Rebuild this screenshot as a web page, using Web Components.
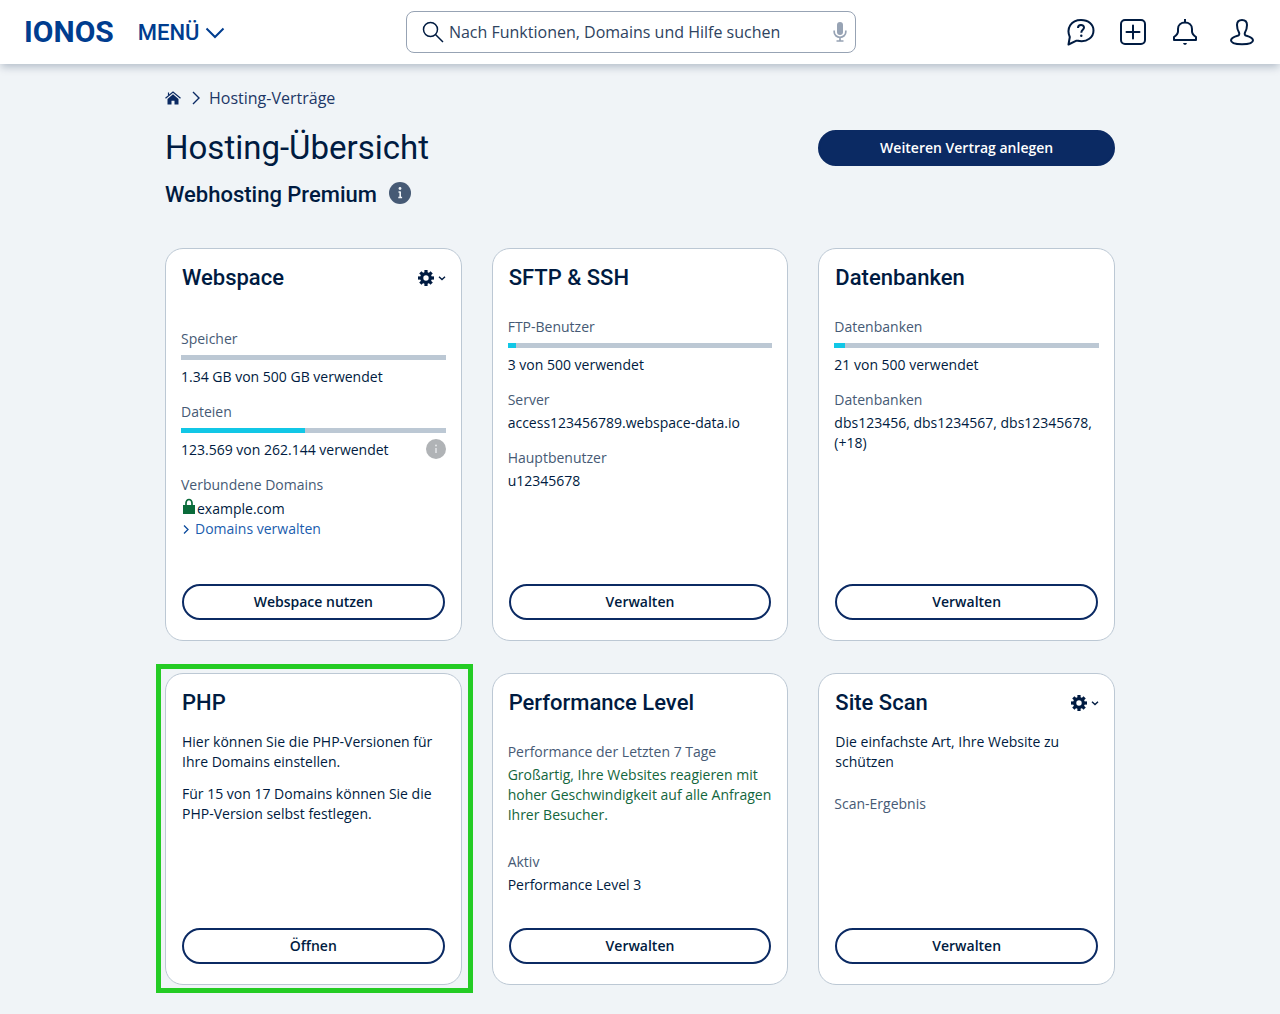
<!DOCTYPE html>
<html lang="de">
<head>
<meta charset="utf-8">
<meta name="viewport" content="width=device-width, initial-scale=1">
<title>Hosting-Übersicht</title>
<style>
  :root {
    --navy: #0b2a63;
    --ink: #001b41;
    --muted: #465a75;
    --line: #bcc8d4;
    --brand: #003d8f;
    --heading: Roboto, "Noto Sans", sans-serif;
  }
  body {
    margin: 0;
    min-height: 100vh;
    background: #f0f4f7;
    color: var(--ink);
    font: 14px/20px "Open Sans", "Noto Sans", sans-serif;
  }
</style>
</head>
<body>
<hosting-page></hosting-page>

<script>
const define = (name, html, setup) => {
  const template = document.createElement('template');
  template.innerHTML = html;
  customElements.define(name, class extends HTMLElement {
    constructor() {
      super();
      this.attachShadow({ mode: 'open' }).append(template.content.cloneNode(true));
    }
    connectedCallback() {
      if (setup) setup(this, this.shadowRoot);
    }
  });
};

const gearTeeth = [0, 45, 90, 135, 180, 225, 270, 315]
  .map(a => `<rect x="6.4" y="0" width="3.2" height="4" transform="rotate(${a} 8 8)"/>`).join('');

const icons = {
  down: [20, 12, '<path d="M1.5 1.5 10 10l8.500-8.500" fill="none" stroke="currentColor" stroke-width="2"/>'],
  search: [22, 22, '<g fill="none" stroke="currentColor" stroke-width="1.500"><circle cx="8.500" cy="8.500" r="7"/><path d="M13.500 13.500 21 21"/></g>'],
  mic: [14, 22, '<rect x="4" y="1" width="6" height="13" rx="3" fill="currentColor"/><path d="M1.200 9.500v1.500a5.800 5.300 0 0 0 11.600 0V9.500M7 16v4M3.500 20h7" fill="none" stroke="currentColor" stroke-width="1.700"/>'],
  help: [28, 28, '<path d="M1.500 26.500 2.800 19C-1 10.500 4 2 14 2c7.500 0 12.500 4.500 12.500 10.500 0 7-6.500 11.500-14 10.500-1.500-.2-2-.5-3-.3z" fill="none" stroke="currentColor" stroke-width="2" stroke-linejoin="round"/><path d="M11 10c0-3.800 6-3.800 6-.5 0 2.300-2.700 2.300-2.700 5.200" fill="none" stroke="currentColor" stroke-width="2"/><circle cx="14.300" cy="17.800" r="1.200" fill="currentColor"/>'],
  plus: [28, 28, '<g fill="none" stroke="currentColor" stroke-width="2"><rect x="2" y="2" width="24" height="24" rx="4"/><path d="M14 7.500v13M7.500 14h13" stroke-linecap="round"/></g>'],
  bell: [28, 28, '<g fill="none" stroke="currentColor" stroke-width="2" stroke-linejoin="round"><path d="M14 1v3M3 22h22v-3c-2.800-2-4-3.200-4-5.500V11c0-4-3-6.500-7-6.500S7 7 7 11v2.500C7 15.800 5.800 17 3 19z"/></g><path d="M12 25h4l-1 1.800h-2z" fill="currentColor"/>'],
  user: [28, 28, '<path d="M14 2c-3 0-5 2-5 5 0 3.500.8 5.500 2 7.500.7 1.500.2 2.800-1.500 3.300C5.500 19 3 20.200 3 22.300 3 25 8 26.300 14 26.300s11-1.300 11-4c0-2.100-2.500-3.300-6.500-4.500-1.700-.5-2.200-1.800-1.500-3.300 1.200-2 2-4 2-7.500 0-3-2-5-5-5z" fill="none" stroke="currentColor" stroke-width="2" stroke-linejoin="round"/>'],
  home: [16, 14, '<path d="M8 3.200 2.500 8v5.500h4V9.800h3v3.700h4V8z" fill="currentColor"/><path d="M.5 7.300 8 1l7.500 6.300M3.500 4V1.500" fill="none" stroke="currentColor" stroke-width="1.200"/>'],
  next: [10, 14, '<path d="m2 1 6 6-6 6" fill="none" stroke="currentColor" stroke-width="1.400"/>'],
  more: [8, 10, '<path d="m2 1.500 4 4-4 4" fill="none" stroke="currentColor" stroke-width="1.300"/>'],
  gear: [16, 16, `<g fill="currentColor">${gearTeeth}</g><circle cx="8" cy="8" r="4.300" fill="none" stroke="currentColor" stroke-width="3.200"/>`],
  caret: [8, 6, '<path d="m1 1.800 3 2.700 3-2.700" fill="none" stroke="currentColor" stroke-width="1.400"/>'],
  lock: [14, 17, '<rect x="1" y="7" width="12" height="9" fill="currentColor"/><path d="M4 8V5a3 3.500 0 0 1 6 0v3" fill="none" stroke="currentColor" stroke-width="1.700"/>'],
  info: [22, 22, '<circle cx="11" cy="11" r="11" fill="currentColor"/><path d="M11.200 9.500v6.500M9.500 10h1.800M9.300 15.500h3.800" stroke="#f0f4f8" stroke-width="1.600"/><circle cx="11" cy="6.500" r="1.400" fill="#f0f4f8"/>'],
  note: [20, 20, '<circle cx="10" cy="10" r="10" fill="currentColor"/><path d="M10 9v5" stroke="#e4e6e8" stroke-width="1.500"/><circle cx="10" cy="6.500" r="1" fill="#e4e6e8"/>']
};

define('ui-icon', `
  <style>:host { display: block; flex: none; } svg { display: block; }</style>
`, (el, root) => {
  if (root.querySelector('svg')) return;
  const [w, h, shapes] = icons[el.getAttribute('name')];
  root.innerHTML += `<svg width="${w}" height="${h}" viewBox="0 0 ${w} ${h}" aria-hidden="true">${shapes}</svg>`;
});

define('icon-button', `
  <style>
    :host { display: block; flex: none; }
    button { display: flex; align-items: center; gap: var(--gap, 4px); margin: 0; padding: 0; border: 0; background: none; color: inherit; font: inherit; cursor: pointer; }
  </style>
  <button type="button"><slot></slot></button>
`, (el, root) => root.querySelector('button').setAttribute('aria-label', el.getAttribute('label')));

define('pill-button', `
  <style>
    :host { display: block; }
    button {
      display: block; width: 100%; height: 36px; margin: 0; padding: 0 16px; box-sizing: border-box;
      border: 2px solid var(--navy); border-radius: 18px; background: #fff; color: var(--ink);
      font: 600 14px/20px "Open Sans", sans-serif; cursor: pointer;
    }
    :host([primary]) button { background: var(--navy); color: #fff; }
  </style>
  <button type="button"><slot></slot></button>
`);

define('site-search', `
  <style>
    :host { display: block; }
    label {
      display: flex; align-items: center; gap: 5px; height: 42px; box-sizing: border-box;
      padding: 0 8px 0 15px; border: 1px solid #97a3b4; border-radius: 8px; background: #fff; color: var(--ink);
    }
    input { flex: 1; min-width: 0; padding: 0; border: 0; outline: 0; background: none; color: var(--ink); font: 16px/24px "Open Sans", sans-serif; }
    input::placeholder { color: #2e4360; opacity: 1; }
    .mic { color: #97a3b4; }
  </style>
  <label>
    <ui-icon name="search"></ui-icon>
    <input type="search" aria-label="Suche" placeholder="Nach Funktionen, Domains und Hilfe suchen">
    <ui-icon class="mic" name="mic"></ui-icon>
  </label>
`);

define('site-header', `
  <style>
    :host { display: block; position: relative; background: #fff; box-shadow: 0 4px 8px -1px rgba(0, 27, 65, .25); }
    header { display: grid; grid-template-columns: 21fr minmax(0, 450px) 22fr; align-items: center; height: 64px; padding: 0 24px; }
    .start, .end { display: flex; align-items: center; gap: 24px; }
    .start { color: var(--brand); }
    .end { justify-content: flex-end; }
    .logo { color: inherit; text-decoration: none; font: bold 30px/40px Roboto, sans-serif; }
    .menu { --gap: 6px; padding-top: 2px; font: 500 22px/30px Roboto, sans-serif; }
    .account { margin-left: 5px; }
  </style>
  <header>
    <div class="start">
      <a class="logo" href="#">IONOS</a>
      <icon-button class="menu" label="Menü"><span>MENÜ</span><ui-icon name="down"></ui-icon></icon-button>
    </div>
    <site-search></site-search>
    <div class="end">
      <icon-button label="Hilfe"><ui-icon name="help"></ui-icon></icon-button>
      <icon-button label="Neu"><ui-icon name="plus"></ui-icon></icon-button>
      <icon-button label="Mitteilungen"><ui-icon name="bell"></ui-icon></icon-button>
      <icon-button class="account" label="Konto"><ui-icon name="user"></ui-icon></icon-button>
    </div>
  </header>
`);

define('crumb-trail', `
  <style>
    :host { display: block; }
    nav { display: flex; align-items: center; gap: 8px; padding-top: 0; color: var(--navy); font-size: 16px; line-height: 24px; }
    a { color: inherit; text-decoration: none; }
    .home { margin-right: 2px; }
    .page { color: #1d3766; }
  </style>
  <nav aria-label="Brotkrumen">
    <a class="home" href="#" aria-label="Startseite"><ui-icon name="home"></ui-icon></a>
    <ui-icon name="next"></ui-icon>
    <a class="page" href="#">Hosting-Verträge</a>
  </nav>
`);

define('product-card', `
  <style>
    :host {
      display: flex; flex-direction: column; position: relative; box-sizing: border-box;
      padding: 14px 15px 20px; border: 1px solid var(--line); border-radius: 18px; background: #fff;
    }
    :host([marked])::after { content: ""; position: absolute; inset: -10px -12px -9px -10px; border: 5px solid #24cc24; pointer-events: none; }
    .head { display: flex; justify-content: space-between; align-items: center; padding: 0 0 0 1px; }
    h3 { margin: 0; font: 500 22px/30px var(--heading); }
    .body { display: flex; flex-direction: column; gap: 15px; flex: 1; padding: 24px 0 33px; }
    :host([lead]) .body { padding-top: 36px; }
    :host([text]) .body { padding: 14px 1px 33px; gap: 12px; }
    .action { padding: 0 1px; }
    icon-button:not([shown]) { display: none; }
  </style>
  <div class="head">
    <h3></h3>
    <icon-button label="Einstellungen"><ui-icon name="gear"></ui-icon><ui-icon name="caret"></ui-icon></icon-button>
  </div>
  <div class="body"><slot></slot></div>
  <div class="action"><pill-button></pill-button></div>
`, (el, root) => {
  root.querySelector('h3').textContent = el.getAttribute('heading');
  root.querySelector('pill-button').textContent = el.getAttribute('action');
  root.querySelector('icon-button').toggleAttribute('shown', el.hasAttribute('settings'));
});

define('card-field', `
  <style>
    :host { display: block; }
    .label { color: var(--muted); margin-bottom: 3px; }
    .value { display: block; }
  </style>
  <div class="label"></div>
  <div class="value"><slot></slot></div>
`, (el, root) => { root.querySelector('.label').textContent = el.getAttribute('label'); });

define('usage-field', `
  <style>
    :host { display: block; }
    .label { color: var(--muted); }
    .bar { height: 5px; margin: 6px 0 7px; background: var(--line); }
    .fill { height: 100%; background: #11c7e6; }
    .value { display: flex; justify-content: space-between; height: 20px; }
    ::slotted(ui-icon) { color: #b0b3b6; margin-top: -1px; }
  </style>
  <div class="label"></div>
  <div class="bar" role="meter" aria-valuemin="0" aria-valuemax="100"><div class="fill"></div></div>
  <div class="value"><slot></slot></div>
`, (el, root) => {
  const used = el.getAttribute('used');
  root.querySelector('.label').textContent = el.getAttribute('label');
  root.querySelector('.bar').setAttribute('aria-valuenow', used);
  root.querySelector('.bar').setAttribute('aria-label', el.getAttribute('label'));
  root.querySelector('.fill').style.width = used + '%';
});

define('hosting-page', `
  <style>
    :host { display: block; }
    main { max-width: 950px; margin: 0 auto; padding: 22px 24px 28px; }
    .grid { display: grid; grid-template-columns: repeat(3, minmax(0, 1fr)); column-gap: 30px; row-gap: 32px; }
    .intro { align-items: center; margin-top: 18px; }
    h1 { grid-column: span 2; margin: 0; font: 400 33px/40px var(--heading); }
    .plan { display: flex; align-items: center; gap: 12px; margin: 12px 0 38px; color: #465a75; }
    .plan ui-icon { margin-bottom: 4px; }
    h2 { margin: 0; color: var(--ink); font: 500 22px/30px var(--heading); }
    p { margin: 0; }
    a { color: #1a5dae; text-decoration: none; }
    .domain { display: flex; align-items: center; gap: 1px; margin-top: 4px; }
    .domain ui-icon { color: #0a6b3a; margin: -5px 0 0 1px; }
    .manage { display: flex; align-items: center; gap: 5px; margin: 0 0 12px 1px; }
    .manage ui-icon { color: #0b4a9c; }
    .good { color: #12663c; margin-bottom: 12px; }
    .scan { margin: 10px 0 0 -1px; }
  </style>
  <site-header></site-header>
  <main>
    <crumb-trail></crumb-trail>
    <div class="grid intro">
      <h1>Hosting-Übersicht</h1>
      <pill-button primary>Weiteren Vertrag anlegen</pill-button>
    </div>
    <div class="plan"><h2>Webhosting Premium</h2><ui-icon name="info"></ui-icon></div>
    <div class="grid">
      <product-card lead settings heading="Webspace" action="Webspace nutzen">
        <usage-field label="Speicher" used="0"><span>1.34 GB von 500 GB verwendet</span></usage-field>
        <usage-field label="Dateien" used="47"><span>123.569 von 262.144 verwendet</span><ui-icon name="note"></ui-icon></usage-field>
        <card-field label="Verbundene Domains">
          <div class="domain"><ui-icon name="lock"></ui-icon><span>example.com</span></div>
          <a class="manage" href="#"><ui-icon name="more"></ui-icon><span>Domains verwalten</span></a>
        </card-field>
      </product-card>
      <product-card heading="SFTP &amp; SSH" action="Verwalten">
        <usage-field label="FTP-Benutzer" used="3"><span>3 von 500 verwendet</span></usage-field>
        <card-field label="Server">access123456789.webspace-data.io</card-field>
        <card-field label="Hauptbenutzer">u12345678</card-field>
      </product-card>
      <product-card heading="Datenbanken" action="Verwalten">
        <usage-field label="Datenbanken" used="4"><span>21 von 500 verwendet</span></usage-field>
        <card-field label="Datenbanken">dbs123456, dbs1234567, dbs12345678, (+18)</card-field>
      </product-card>
      <product-card text marked heading="PHP" action="Öffnen">
        <p>Hier können Sie die PHP-Versionen für Ihre Domains einstellen.</p>
        <p>Für 15 von 17 Domains können Sie die PHP-Version selbst festlegen.</p>
      </product-card>
      <product-card heading="Performance Level" action="Verwalten">
        <card-field class="good" label="Performance der Letzten 7 Tage">Großartig, Ihre Websites reagieren mit hoher Geschwindigkeit auf alle Anfragen Ihrer Besucher.</card-field>
        <card-field label="Aktiv">Performance Level 3</card-field>
      </product-card>
      <product-card text settings heading="Site Scan" action="Verwalten">
        <p>Die einfachste Art, Ihre Website zu schützen</p>
        <card-field class="scan" label="Scan-Ergebnis"></card-field>
      </product-card>
    </div>
  </main>
`);
</script>
</body>
</html>
